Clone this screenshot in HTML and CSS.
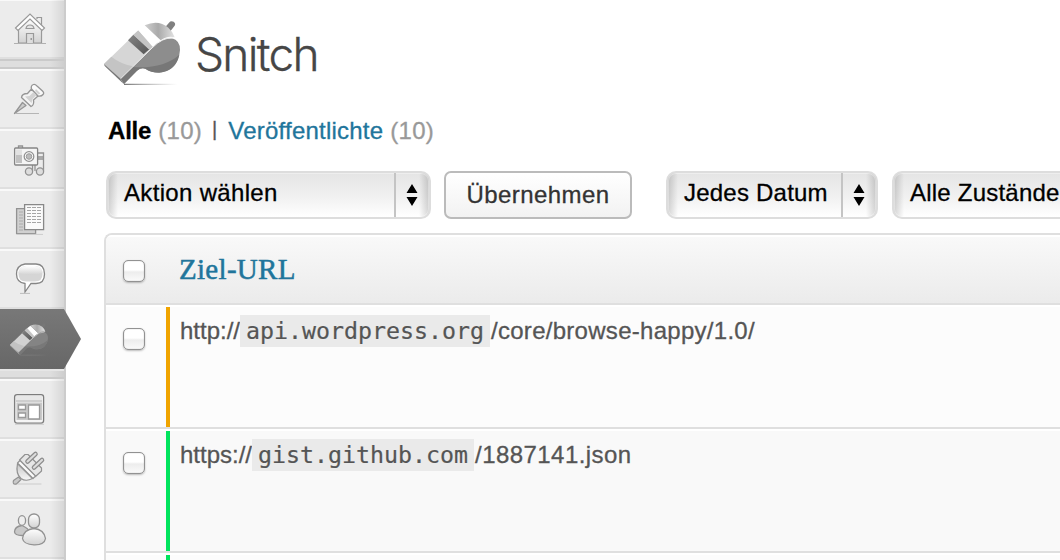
FILE: index.html
```
<!DOCTYPE html>
<html lang="de">
<head>
<meta charset="utf-8">
<title>Snitch</title>
<link rel="stylesheet" href="styles.css">
</head>
<body>
<svg class="defs" aria-hidden="true">
  <defs>
    <linearGradient id="metal" x1="0" y1="0" x2="0" y2="1"><stop offset="0" stop-color="#fff"/><stop offset="1" stop-color="#d2d2d2"/></linearGradient>
    <linearGradient id="shade" x1="0" y1="0" x2="0" y2="1"><stop offset="0" stop-color="#c6c6c6"/><stop offset="1" stop-color="#f8f8f8"/></linearGradient>
    <linearGradient id="top" x1="0" y1="0" x2="1" y2="0"><stop offset="0" stop-color="#cfcfcf"/><stop offset=".45" stop-color="#aaa"/><stop offset="1" stop-color="#e2e2e2"/></linearGradient>
    <linearGradient id="slot" x1="0" y1="0" x2="1" y2="1"><stop offset="0" stop-color="#858585"/><stop offset="1" stop-color="#555"/></linearGradient>
    <linearGradient id="ground" x1="0" y1="0" x2="1" y2="0"><stop offset="0" stop-color="#777"/><stop offset="1" stop-color="#999" stop-opacity="0"/></linearGradient>
    <symbol id="whistle" viewBox="42 60 240 204">
      <path class="w-ring" d="M220 88l17-20q5-7 14-3 7 5 3 12l-17 22z"/>
      <path class="w-body" d="M42 192L145 92L190 140L92 236z"/>
      <path class="w-low" d="M42 192L64 170Q92 192 130 199L92 236z"/>
      <path fill="url(#slot)" d="M114 121L130 104L178 148L161 163z"/>
      <path fill="#c4c4c4" d="M130 104L145 91L190 138L178 149z"/>
      <path fill="#fff" d="M145 91L164 76L212 121L188 140z"/>
      <path fill="url(#top)" d="M164 76Q205 58 235 83Q248 94 254 112Q232 106 212 121z"/>
      <path class="w-edge" d="M42 192L92 236L101 252L44 198z"/>
      <path class="w-side" d="M92 236L186 144Q215 113 246 115Q270 121 270 150Q268 183 245 204Q225 220 194 217Q178 215 166 206Q153 202 141 212L102 252z"/>
      <path class="w-dark" d="M128 201Q220 207 268 164Q258 213 208 218Q181 218 166 206Q153 202 141 212L102 252L92 236z"/>
      <path fill="none" stroke="#eee" stroke-width="3" d="M92 236L186 144Q218 111 249 114"/>
      <path fill="url(#ground)" d="M102 251h160v4H102z"/>
    </symbol>
  </defs>
</svg>
<div class="page">
  <nav class="sidebar">
    <a class="item"><svg class="glyph" viewBox="0 0 64 60" fill="none" stroke="#999" stroke-width="1.200">
      <path d="M37 20v-1.500h4.500v9" fill="#eee"/>
      <path d="M18.500 29L30 19L41.500 29V44H18.500z" fill="url(#metal)"/>
      <path d="M15.500 29L30 15L44.500 29L42 31.500L30 20L18 31.500z" fill="#fff"/>
      <path d="M26 29.500q.5-3.500 4-3.500t4 3.500z" fill="#e4e4e4"/><path d="M26.500 44V34.500h7V44" fill="#ddd"/>
      <path d="M30.500 39h1.500v2h-1.500z" fill="#999" stroke="none"/><path d="M14 44.500h32" stroke-width="1" stroke="#b0b0b0"/></svg></a>
    <div class="separator"></div>
    <a class="item"><svg class="glyph" viewBox="0 0 64 60" fill="none" stroke="#959595" stroke-width="1.300" stroke-linejoin="round">
      <path d="M22.500 33.500L14.500 44.500L26 36.500z" fill="#ccc"/>
      <path d="M31.500 20L27.500 24.500Q22 24.500 21.500 28.500L31 37.500Q34.500 36 33.500 31L38 27z" fill="#f3f3f3"/>
      <path d="M31.500 20Q30.500 16.500 33.500 15.500Q35 15 37 17L42.500 22Q44.500 24 43 25.500Q41.500 27.500 38 27z" fill="#fafafa"/>
      <path d="M25 27.500l6.500 6.500 1-4 4-4-3-3-4 4zM36 20l4.500 4.500-2 1-3.500-3.500z" fill="#d2d2d2" stroke="none"/><path d="M15 44.500h24" stroke="#b5b5b5" stroke-width="1"/></svg></a>
    <a class="item"><svg class="glyph" viewBox="0 0 64 60" fill="none" stroke="#929292" stroke-width="1.300">
      <path d="M32.500 30V42M35 42V24h8.500v18M35.500 30h8M37 24v4h6" />
      <circle cx="29" cy="42.500" r="3.600" fill="#ddd"/><circle cx="40" cy="42.500" r="3.600" fill="#ddd"/>
      <path d="M18.500 19v-2h4v2" fill="#eee"/><rect x="14.600" y="19" width="23" height="17" rx="1" fill="#f5f5f5" stroke="#858585"/>
      <path d="M16 20.500h6V26h-6z" fill="#e2e2e2" stroke="none"/><path d="M16 26h6v8h-6z" fill="#c1c1c1" stroke="none"/>
      <circle cx="29" cy="27.500" r="4.800" fill="#fff"/><circle cx="29" cy="27.500" r="2.800" fill="#bbb" stroke="#999" stroke-width="1"/></svg></a>
    <a class="item"><svg class="glyph" viewBox="0 0 64 60" fill="none" stroke="#929292" stroke-width="1.300">
      <path d="M16.600 19.600h19v25h-19z" fill="#d0d0d0"/><path d="M19 23h4m-4 3h4m-4 3h4m-4 3h4m-4 3h4m-4 3h4m-4 3h4" stroke="#aaa" stroke-width="1"/>
      <path d="M24.600 15.600h19v25h-19z" fill="#fafafa" stroke="#888"/>
      <path d="M27 18.500h15M27 21.500h15M27 24.500h14M27 27.500h15M27 30.500h14M27 33.500h15" stroke="#a5a5a5" stroke-width="1" stroke-dasharray="4 1"/><path d="M17 45.400h26" stroke="#ccc" stroke-width="1"/></svg></a>
    <a class="item"><svg class="glyph" viewBox="0 0 64 60">
      <path d="M25 15H36Q44.500 15.500 44.500 25T36 34.500H31L25 43V34.500Q16.500 33.500 16.500 25T25 15z" fill="#fff" stroke="#858585" stroke-width="1.300"/>
      <path d="M26 17H35Q42.500 17.500 42.500 25T35 32.500H26Q18.500 32.500 18.500 25T26 17z" fill="#d5d5d5"/>
      <path d="M26 17H35Q42.500 18 42.500 24Q31 28 18.500 24Q19 17.500 26 17z" fill="url(#metal)"/><path d="M20 44.400h10" stroke="#bbb"/></svg></a>
    <a class="item current"><svg class="whistle-small"><use href="#whistle"/></svg></a>
    <div class="separator"></div>
    <a class="item"><svg class="glyph" viewBox="0 0 64 60" fill="none" stroke="#999" stroke-width="1.300">
      <rect x="14.600" y="15.600" width="29" height="28.500" rx="2.500" fill="#f5f5f5" stroke="#7d7d7d"/>
      <path d="M16 17h26v4H16z" fill="#e8e8e8" stroke="none"/><path d="M16 22h26" stroke="#b8b8b8"/><path d="M16.500 23.500h25.500v17.500H16.500z" fill="#c9c9c9" stroke="none"/>
      <path d="M18.500 26h7v4.500h-7zM18.500 34h7v4.500h-7zM28.500 26h11v14h-11z" fill="#fff"/><path d="M15 45.300h29" stroke="#ccc" stroke-width="1"/></svg></a>
    <a class="item"><svg class="glyph" viewBox="0 0 64 60" fill="none" stroke="#929292" stroke-width="1.200" stroke-linejoin="round" stroke-linecap="round">
      <path d="M18.500 38l-5 3.500q-1.500 4.500 3 3.500l4.500-4.500z" fill="#c9c9c9"/>
      <path d="M19.500 21L25 15.500H28L41.500 29V32L35.500 37.500z" fill="#e6e6e6"/>
      <path d="M17.500 24.500L32.500 39.500Q26 43 21 39.500Q15.500 35 17.500 24.500z" fill="url(#shade)"/>
      <path d="M17.500 24L20 21.500L35.500 37L33 39.500z" fill="#fafafa"/>
      <path d="M27.500 22.500L35.500 15M34 28.500L42 21" stroke="#8c8c8c" stroke-width="4.600"/><path d="M27.500 22.500L35.500 15M34 28.500L42 21" stroke="#dcdcdc" stroke-width="2.200"/>
      <path d="M18 45h23" stroke="#ccc" stroke-width="1"/></svg></a>
    <a class="item"><svg class="glyph" viewBox="0 0 64 60" stroke="#929292" stroke-width="1.300">
      <path d="M22 26.500Q14.500 27.500 14.500 33Q15 36.500 22 36.500T29 33T22 26.500z" fill="#c8c8c8"/><ellipse cx="22" cy="21.500" rx="3.600" ry="4.900" fill="#eee"/>
      <path d="M34 29.500Q23.500 30.500 22.500 39.500Q23.500 45.500 34 45.800T45.500 39.500Q44 30.500 34 29.500z" fill="url(#metal)"/><rect x="28.500" y="15" width="11" height="14" rx="5.300" fill="url(#metal)"/></svg></a>
    <a class="item"></a>
  </nav>
  <main class="content">
    <header class="title"><svg class="whistle-large"><use href="#whistle"/></svg><h1>Snitch</h1></header>
    <div class="filters"><b>Alle</b><span class="count">(10)</span><span class="pipe">|</span><a>Veröffentlichte</a><span class="count">(10)</span></div>
    <div class="toolbar">
      <div class="select action"><span>Aktion wählen</span><i><svg width="12" height="22"><path d="M6 0l5.500 9H.500zM.500 13h11L6 22z"/></svg></i></div>
      <button class="apply">Übernehmen</button>
      <div class="select date"><span>Jedes Datum</span><i><svg width="12" height="22"><path d="M6 0l5.500 9H.500zM.500 13h11L6 22z"/></svg></i></div>
      <div class="select state"><span>Alle Zustände</span><i></i></div>
    </div>
    <section class="table">
      <div class="head"><span class="check"></span><span class="column">Ziel-URL</span></div>
      <div class="row blocked"><div class="pick"><span class="check"></span></div><div class="url">http://<code>api.wordpress.org</code><span class="path">/core/browse-happy/1.0/</span></div></div>
      <div class="row alt"><div class="pick"><span class="check"></span></div><div class="url">https://<code>gist.github.com</code><span class="path file">/1887141.json</span></div></div>
      <div class="row"><div class="pick"></div><div class="url"></div></div>
    </section>
  </main>
</div>
</body>
</html>
```
FILE: styles.css
```
* { box-sizing: border-box; }
body { margin: 0; background: #fff; }
.defs { position: absolute; width: 0; height: 0; }
.page { width: 1060px; height: 560px; overflow: hidden; display: flex; font: 24px/32px "Liberation Sans", Arial, sans-serif; color: #555; -webkit-text-stroke: .3px; }

.sidebar { width: 66px; height: 562px; flex: none; margin-top: -1px; border-right: 2px solid #ccc; background: #ececec; }
.item { display: block; position: relative; height: 60px; background: linear-gradient(90deg, rgba(0,0,0,0) 50px, rgba(0,0,0,.09)) 0 0, linear-gradient(#f9f9f9 2px, #ececec 2px, #ececec 58px, #dfdfdf 58px); }
.glyph { display: block; width: 64px; height: 60px; }
.separator { height: 10px; border: solid #cacaca; border-width: 2px 0; background: linear-gradient(90deg, #dedede 50px, #cecece); }
.item.current { width: 81px; background: linear-gradient(#787878, #676767); clip-path: polygon(0 0, 64px 0, 100% 50%, 64px 100%, 0 100%); }
.current + .separator { border-top-color: #e6e6e6; }
.whistle-small { display: block; width: 40px; height: 34px; margin-left: 10px; transform: translateY(14px); --ring: #777; --body: #d2d2d2; --low: #c2c2c2; --side: #848484; --dark: #787878; --edge: #aaa; }
.whistle-large { width: 80px; height: 68px; --ring: #808080; --body: #d6d6d6; --low: #c4c4c4; --side: #8d8d8d; --dark: #777; --edge: #777; }
.w-ring { fill: var(--ring); }
.w-body { fill: var(--body); }
.w-low { fill: var(--low); }
.w-side { fill: var(--side); }
.w-dark { fill: var(--dark); }
.w-edge { fill: var(--edge); }

.content { flex: 1; min-width: 0; padding: 20px 0 0 38px; }
.title { display: flex; height: 94px; }
.title h1 { margin: 4px 0 0 11px; font: 300 46px/60px Inter, Roboto, sans-serif; letter-spacing: -1.7px; color: #464646; }
.filters { display: flex; height: 57px; padding: 1px 0 0 4px; }
.filters b { color: #000; letter-spacing: -.2px; }
.count { color: #999; margin-left: 7px; letter-spacing: .3px; }
.pipe { margin: -2px 11px 0 10px; font-size: 20px; color: #555; }
.filters a { color: #21759b; letter-spacing: .22px; }

.toolbar { display: flex; height: 48px; margin-left: 2px; }
.select { flex: none; display: flex; height: 48px; border: 2px solid #ddd; border-radius: 10px; color: #000; background: linear-gradient(90deg, rgba(0,0,0,.16), transparent 10px, transparent calc(100% - 10px), rgba(0,0,0,.16)), linear-gradient(#e5e5e5, #f0f0f0 52%, #fff); box-shadow: inset 0 0 0 1px rgba(255,255,255,.35); overflow: hidden; white-space: nowrap; letter-spacing: .22px; }
.select span { flex: 1; padding: 4px 0 0 16px; }
.select i { width: 35px; border-left: 2px solid #c4c4c4; padding: 11px 0 0 10px; line-height: 0; }
.action { width: 325px; letter-spacing: .33px; }
.date { width: 212px; margin-left: 34px; }
.state { width: 260px; margin-left: 14px; }
.apply { flex: none; width: 188px; height: 48px; margin: 0 0 0 13px; padding: 0 0 1px; border: 2px solid #bbb; border-radius: 7px; background: linear-gradient(#fff, #f2f2f2); font: 24px/40px "Liberation Sans", Arial, sans-serif; letter-spacing: .45px; color: #333; }

.table { width: 1000px; margin-top: 14px; border: solid #dfdfdf; border-width: 2px 0 0 2px; border-radius: 8px 0 0; overflow: hidden; }
.head { display: flex; height: 70px; padding: 25px 0 0 17px; border-bottom: 2px solid #dfdfdf; background: linear-gradient(#fff 2px, #f9f9f9 2px, #ebebeb); }
.column { margin: -7px 0 0 34px; font: 29px/32px "Liberation Serif", serif; letter-spacing: .3px; color: #21759b; -webkit-text-stroke: .5px; }
.check { display: block; flex: none; width: 22px; height: 22px; border: 1px solid #929292; border-radius: 5px; background: linear-gradient(#fff 45%, #ededed 55%, #fafafa); box-shadow: 0 1px 2px rgba(0,0,0,.25), inset 0 0 1px rgba(0,0,0,.4); }
.row { --state: #00e45d; display: flex; height: 124px; padding-top: 2px; border-bottom: 2px solid #dfdfdf; background: linear-gradient(#fff 2px, #fcfcfc 2px); }
.row.alt { background: linear-gradient(#fff 2px, #f9f9f9 2px); }
.blocked { --state: #f0a400; }
.pick { width: 60px; padding: 21px 0 0 17px; }
.url { flex: 1; display: flex; align-items: flex-start; padding: 8px 0 0 10px; border-left: 4px solid var(--state); }
.url code { height: 32px; padding: 0 6px; margin-right: 1px; background: #eaeaea; font: 23.250px/32px "DejaVu Sans Mono", monospace; -webkit-text-stroke: .2px; }
.path { letter-spacing: .28px; }
.file { letter-spacing: .45px; }
```
